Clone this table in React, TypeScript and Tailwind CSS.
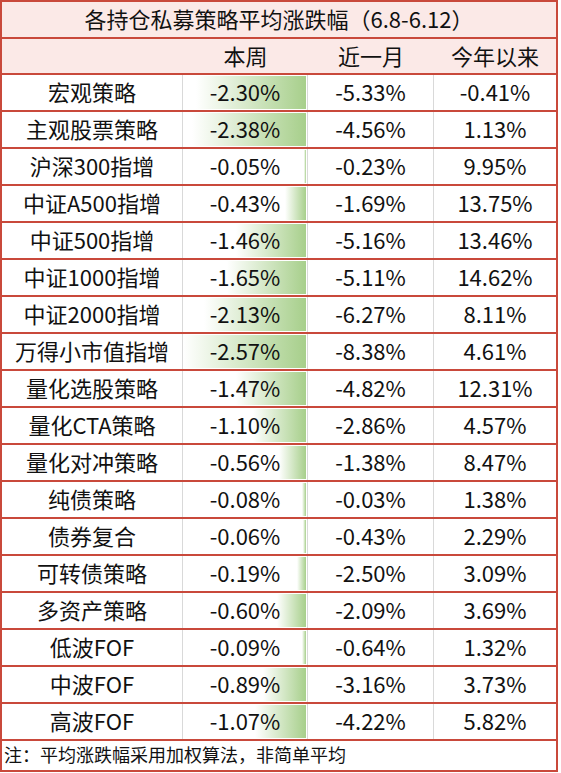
const rows: [string, string, string, string][] = [
  ["宏观策略", "-2.30%", "-5.33%", "-0.41%"],
  ["主观股票策略", "-2.38%", "-4.56%", "1.13%"],
  ["沪深300指增", "-0.05%", "-0.23%", "9.95%"],
  ["中证A500指增", "-0.43%", "-1.69%", "13.75%"],
  ["中证500指增", "-1.46%", "-5.16%", "13.46%"],
  ["中证1000指增", "-1.65%", "-5.11%", "14.62%"],
  ["中证2000指增", "-2.13%", "-6.27%", "8.11%"],
  ["万得小市值指增", "-2.57%", "-8.38%", "4.61%"],
  ["量化选股策略", "-1.47%", "-4.82%", "12.31%"],
  ["量化CTA策略", "-1.10%", "-2.86%", "4.57%"],
  ["量化对冲策略", "-0.56%", "-1.38%", "8.47%"],
  ["纯债策略", "-0.08%", "-0.03%", "1.38%"],
  ["债券复合", "-0.06%", "-0.43%", "2.29%"],
  ["可转债策略", "-0.19%", "-2.50%", "3.09%"],
  ["多资产策略", "-0.60%", "-2.09%", "3.69%"],
  ["低波FOF", "-0.09%", "-0.64%", "1.32%"],
  ["中波FOF", "-0.89%", "-3.16%", "3.73%"],
  ["高波FOF", "-1.07%", "-4.22%", "5.82%"],
];

const MAX = 2.57;
const BAR_MAX = 123;

const App = () => {
  return (
    <div className="bg-white w-[561px] h-[773px] text-[#111] font-['Noto_Sans_CJK_SC',sans-serif]">
      <div className="w-[558px] border-2 border-[#c9493b] flex flex-col">
        <div className="h-[35px] pb-[3px] bg-[#fbe9e7] flex items-center justify-center text-[22px] leading-none">
          各持仓私募策略平均涨跌幅（6.8-6.12）
        </div>
        <div className="h-[36px] pb-[3px] border-t-2 border-[#c9493b] bg-[#fbe9e7] flex items-center text-[22px] leading-none">
          <div className="w-[181px]" />
          <div className="w-[125px] text-center">本周</div>
          <div className="w-[126px] text-center">近一月</div>
          <div className="flex-1 text-center">今年以来</div>
        </div>
        {rows.map((r, i) => {
          const w = Math.round((Math.abs(parseFloat(r[1])) / MAX) * BAR_MAX);
          return (
            <div
              key={i}
              className="h-[37px] border-t-2 border-[#c9493b] flex text-[22px] leading-none"
            >
              <div className="w-[181px] pb-[4px] border-r border-[#d9d9d9] flex items-center justify-center">
                {r[0]}
              </div>
              <div
                className="w-[125px] pb-[4px] border-r border-[#d9d9d9] flex items-center justify-center bg-no-repeat"
                style={{
                  backgroundImage: "linear-gradient(to right, #ffffff, #a7cf8b)",
                  backgroundSize: `${w}px 33px`,
                  backgroundPosition: "right 1px center",
                }}
              >
                {r[1]}
              </div>
              <div className="w-[126px] pb-[4px] border-r border-[#d9d9d9] flex items-center justify-center">
                {r[2]}
              </div>
              <div className="flex-1 pb-[4px] flex items-center justify-center">{r[3]}</div>
            </div>
          );
        })}
        <div className="h-[31px] border-t-2 border-[#c9493b] flex items-center pl-[2px] pb-[3px] text-[18px] leading-none">
          注：平均涨跌幅采用加权算法，非简单平均
        </div>
      </div>
    </div>
  );
};

export default App;
